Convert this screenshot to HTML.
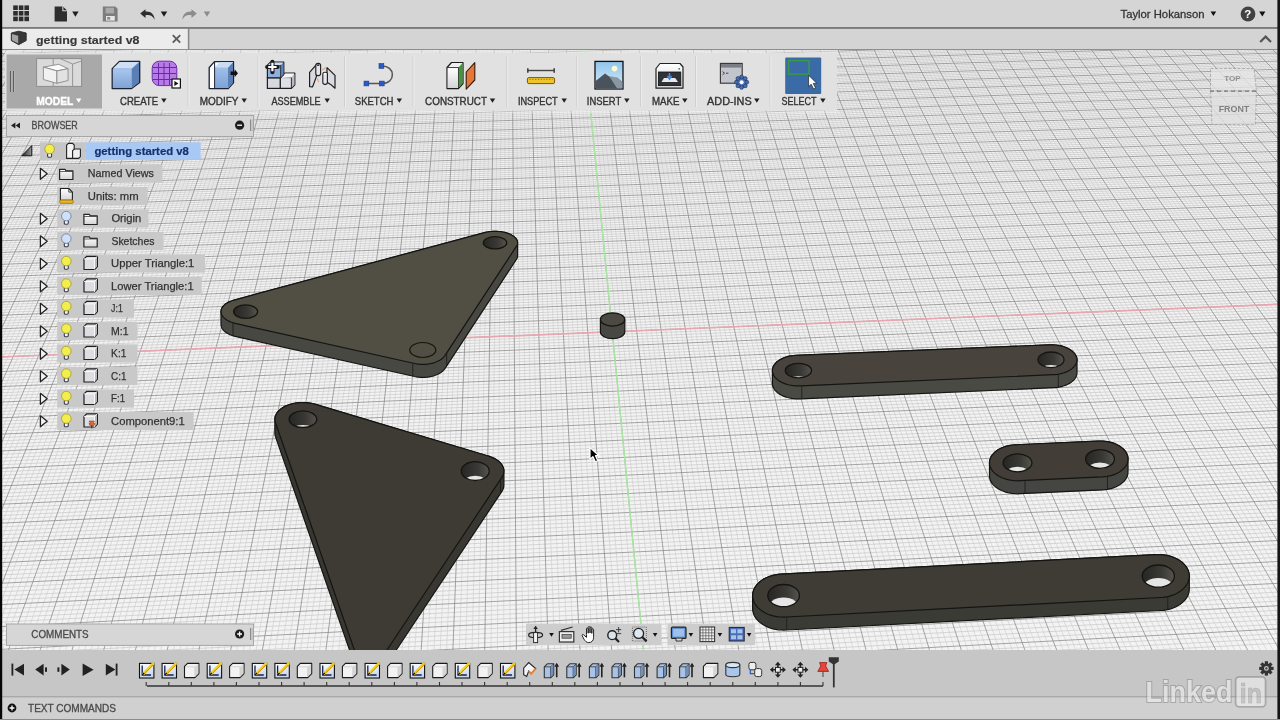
<!DOCTYPE html><html><head><meta charset="utf-8"><style>
html,body{margin:0;padding:0}
body{width:1280px;height:720px;overflow:hidden;position:relative;background:#f0f0f0;font-family:"Liberation Sans",sans-serif}
.vp{position:absolute;left:0;top:0;will-change:transform}
</style></head><body>
<svg class="vp" width="1280" height="720" viewBox="0 0 1280 720">
<rect x="0" y="50" width="1280" height="600" fill="#f3f3f3"/>
<filter id="gblur" x="0" y="0" width="1" height="1"><feGaussianBlur stdDeviation="0.55"/></filter>
<linearGradient id="holeg" x1="0" y1="0" x2="1" y2="0"><stop offset="0" stop-color="#262623"/><stop offset="0.6" stop-color="#3a3935"/><stop offset="1" stop-color="#55544e"/></linearGradient>
<g filter="url(#gblur)">
<path d="M-4.4 50.0L-391.1 650.0M-0.8 50.0L-384.8 650.0M2.8 50.0L-378.4 650.0M10.0 50.0L-365.7 650.0M13.6 50.0L-359.4 650.0M17.2 50.0L-353.0 650.0M20.8 50.0L-346.7 650.0M28.1 50.0L-334.0 650.0M31.7 50.0L-327.7 650.0M35.3 50.0L-321.3 650.0M38.9 50.0L-315.0 650.0M46.1 50.0L-302.3 650.0M49.7 50.0L-296.0 650.0M53.3 50.0L-289.6 650.0M56.9 50.0L-283.3 650.0M64.2 50.0L-270.6 650.0M67.8 50.0L-264.3 650.0M71.4 50.0L-257.9 650.0M75.0 50.0L-251.6 650.0M82.2 50.0L-238.9 650.0M85.8 50.0L-232.6 650.0M89.4 50.0L-226.2 650.0M93.0 50.0L-219.9 650.0M100.3 50.0L-207.2 650.0M103.9 50.0L-200.8 650.0M107.5 50.0L-194.5 650.0M111.1 50.0L-188.2 650.0M118.3 50.0L-175.5 650.0M121.9 50.0L-169.1 650.0M125.6 50.0L-162.8 650.0M129.2 50.0L-156.4 650.0M136.4 50.0L-143.8 650.0M140.0 50.0L-137.4 650.0M143.6 50.0L-131.1 650.0M147.2 50.0L-124.7 650.0M154.4 50.0L-112.0 650.0M158.1 50.0L-105.7 650.0M161.7 50.0L-99.3 650.0M165.3 50.0L-93.0 650.0M172.5 50.0L-80.3 650.0M176.1 50.0L-74.0 650.0M179.7 50.0L-67.6 650.0M183.3 50.0L-61.3 650.0M190.6 50.0L-48.6 650.0M194.2 50.0L-42.2 650.0M197.8 50.0L-35.9 650.0M201.4 50.0L-29.6 650.0M208.6 50.0L-16.9 650.0M212.2 50.0L-10.5 650.0M215.9 50.0L-4.2 650.0M219.5 50.0L2.2 650.0M226.7 50.0L14.9 650.0M230.3 50.0L21.2 650.0M233.9 50.0L27.6 650.0M237.5 50.0L33.9 650.0M244.8 50.0L46.6 650.0M248.4 50.0L52.9 650.0M252.0 50.0L59.3 650.0M255.6 50.0L65.6 650.0M262.8 50.0L78.3 650.0M266.4 50.0L84.7 650.0M270.1 50.0L91.0 650.0M273.7 50.0L97.4 650.0M280.9 50.0L110.1 650.0M284.5 50.0L116.4 650.0M288.1 50.0L122.8 650.0M291.7 50.0L129.1 650.0M299.0 50.0L141.8 650.0M302.6 50.0L148.1 650.0M306.2 50.0L154.5 650.0M309.8 50.0L160.8 650.0M317.0 50.0L173.5 650.0M320.7 50.0L179.9 650.0M324.3 50.0L186.2 650.0M327.9 50.0L192.6 650.0M335.1 50.0L205.3 650.0M338.7 50.0L211.6 650.0M342.3 50.0L218.0 650.0M346.0 50.0L224.3 650.0M353.2 50.0L237.0 650.0M356.8 50.0L243.4 650.0M360.4 50.0L249.7 650.0M364.0 50.0L256.1 650.0M371.3 50.0L268.8 650.0M374.9 50.0L275.1 650.0M378.5 50.0L281.5 650.0M382.1 50.0L287.8 650.0M389.3 50.0L300.5 650.0M393.0 50.0L306.9 650.0M396.6 50.0L313.2 650.0M400.2 50.0L319.6 650.0M407.4 50.0L332.3 650.0M411.0 50.0L338.6 650.0M414.6 50.0L345.0 650.0M418.3 50.0L351.3 650.0M425.5 50.0L364.0 650.0M429.1 50.0L370.4 650.0M432.7 50.0L376.7 650.0M436.3 50.0L383.1 650.0M443.6 50.0L395.8 650.0M447.2 50.0L402.1 650.0M450.8 50.0L408.5 650.0M454.4 50.0L414.8 650.0M461.7 50.0L427.5 650.0M465.3 50.0L433.9 650.0M468.9 50.0L440.2 650.0M472.5 50.0L446.6 650.0M479.7 50.0L459.3 650.0M483.4 50.0L465.6 650.0M487.0 50.0L472.0 650.0M490.6 50.0L478.3 650.0M497.8 50.0L491.0 650.0M501.4 50.0L497.4 650.0M505.1 50.0L503.7 650.0M508.7 50.0L510.1 650.0M515.9 50.0L522.8 650.0M519.5 50.0L529.2 650.0M523.1 50.0L535.5 650.0M526.8 50.0L541.9 650.0M534.0 50.0L554.6 650.0M537.6 50.0L560.9 650.0M541.2 50.0L567.3 650.0M544.8 50.0L573.6 650.0M552.1 50.0L586.3 650.0M555.7 50.0L592.7 650.0M559.3 50.0L599.0 650.0M562.9 50.0L605.4 650.0M570.2 50.0L618.1 650.0M573.8 50.0L624.5 650.0M577.4 50.0L630.8 650.0M581.0 50.0L637.2 650.0M588.3 50.0L649.9 650.0M591.9 50.0L656.2 650.0M595.5 50.0L662.6 650.0M599.1 50.0L668.9 650.0M606.3 50.0L681.6 650.0M610.0 50.0L688.0 650.0M613.6 50.0L694.4 650.0M617.2 50.0L700.7 650.0M624.4 50.0L713.4 650.0M628.1 50.0L719.8 650.0M631.7 50.0L726.1 650.0M635.3 50.0L732.5 650.0M642.5 50.0L745.2 650.0M646.2 50.0L751.6 650.0M649.8 50.0L757.9 650.0M653.4 50.0L764.3 650.0M660.6 50.0L777.0 650.0M664.2 50.0L783.3 650.0M667.9 50.0L789.7 650.0M671.5 50.0L796.0 650.0M678.7 50.0L808.8 650.0M682.3 50.0L815.1 650.0M686.0 50.0L821.5 650.0M689.6 50.0L827.8 650.0M696.8 50.0L840.5 650.0M700.4 50.0L846.9 650.0M704.1 50.0L853.3 650.0M707.7 50.0L859.6 650.0M714.9 50.0L872.3 650.0M718.5 50.0L878.7 650.0M722.2 50.0L885.0 650.0M725.8 50.0L891.4 650.0M733.0 50.0L904.1 650.0M736.6 50.0L910.5 650.0M740.3 50.0L916.8 650.0M743.9 50.0L923.2 650.0M751.1 50.0L935.9 650.0M754.7 50.0L942.3 650.0M758.4 50.0L948.6 650.0M762.0 50.0L955.0 650.0M769.2 50.0L967.7 650.0M772.8 50.0L974.1 650.0M776.5 50.0L980.4 650.0M780.1 50.0L986.8 650.0M787.3 50.0L999.5 650.0M790.9 50.0L1005.9 650.0M794.6 50.0L1012.2 650.0M798.2 50.0L1018.6 650.0M805.4 50.0L1031.3 650.0M809.0 50.0L1037.6 650.0M812.7 50.0L1044.0 650.0M816.3 50.0L1050.4 650.0M823.5 50.0L1063.1 650.0M827.2 50.0L1069.4 650.0M830.8 50.0L1075.8 650.0M834.4 50.0L1082.2 650.0M841.6 50.0L1094.9 650.0M845.3 50.0L1101.3 650.0M848.9 50.0L1107.6 650.0M852.5 50.0L1114.0 650.0M859.7 50.0L1126.7 650.0M863.4 50.0L1133.1 650.0M867.0 50.0L1139.4 650.0M870.6 50.0L1145.8 650.0M877.9 50.0L1158.5 650.0M881.5 50.0L1164.9 650.0M885.1 50.0L1171.2 650.0M888.7 50.0L1177.6 650.0M896.0 50.0L1190.3 650.0M899.6 50.0L1196.7 650.0M903.2 50.0L1203.0 650.0M906.8 50.0L1209.4 650.0M914.1 50.0L1222.1 650.0M917.7 50.0L1228.5 650.0M921.3 50.0L1234.8 650.0M924.9 50.0L1241.2 650.0M932.2 50.0L1253.9 650.0M935.8 50.0L1260.3 650.0M939.4 50.0L1266.7 650.0M943.1 50.0L1273.0 650.0M950.3 50.0L1285.7 650.0M953.9 50.0L1292.1 650.0M957.6 50.0L1298.5 650.0M961.2 50.0L1304.8 650.0M968.4 50.0L1317.6 650.0M972.0 50.0L1323.9 650.0M975.7 50.0L1330.3 650.0M979.3 50.0L1336.7 650.0M986.5 50.0L1349.4 650.0M990.2 50.0L1355.7 650.0M993.8 50.0L1362.1 650.0M997.4 50.0L1368.5 650.0M1004.7 50.0L1381.2 650.0M1008.3 50.0L1387.6 650.0M1011.9 50.0L1393.9 650.0M1015.5 50.0L1400.3 650.0M1022.8 50.0L1413.0 650.0M1026.4 50.0L1419.4 650.0M1030.0 50.0L1425.8 650.0M1033.6 50.0L1432.1 650.0M1040.9 50.0L1444.8 650.0M1044.5 50.0L1451.2 650.0M1048.1 50.0L1457.6 650.0M1051.8 50.0L1463.9 650.0M1059.0 50.0L1476.7 650.0M1062.6 50.0L1483.0 650.0M1066.3 50.0L1489.4 650.0M1069.9 50.0L1495.8 650.0M1077.1 50.0L1508.5 650.0M1080.8 50.0L1514.9 650.0M1084.4 50.0L1521.2 650.0M1088.0 50.0L1527.6 650.0M1095.3 50.0L1540.3 650.0M1098.9 50.0L1546.7 650.0M1102.5 50.0L1553.1 650.0M1106.1 50.0L1559.4 650.0M1113.4 50.0L1572.2 650.0M1117.0 50.0L1578.5 650.0M1120.6 50.0L1584.9 650.0M1124.3 50.0L1591.3 650.0M1131.5 50.0L1604.0 650.0M1135.1 50.0L1610.4 650.0M1138.8 50.0L1616.7 650.0M1142.4 50.0L1623.1 650.0M1149.6 50.0L1635.8 650.0M1153.3 50.0L1642.2 650.0M1156.9 50.0L1648.6 650.0M1160.5 50.0L1654.9 650.0M1167.8 50.0L1667.7 650.0M1171.4 50.0L1674.1 650.0M1175.0 50.0L1680.4 650.0M1178.6 50.0L1686.8 650.0M1185.9 50.0L1699.5 650.0M1189.5 50.0L1705.9 650.0M1193.2 50.0L1712.3 650.0M1196.8 50.0L1718.6 650.0M1204.0 50.0L1731.4 650.0M1207.7 50.0L1737.7 650.0M1211.3 50.0L1744.1 650.0M1214.9 50.0L1750.5 650.0M1222.2 50.0L1763.2 650.0M1225.8 50.0L1769.6 650.0M1229.4 50.0L1776.0 650.0M1233.0 50.0L1782.3 650.0M1240.3 50.0L1795.1 650.0M1243.9 50.0L1801.4 650.0M1247.6 50.0L1807.8 650.0M1251.2 50.0L1814.2 650.0M1258.4 50.0L1826.9 650.0M1262.1 50.0L1833.3 650.0M1265.7 50.0L1839.7 650.0M1269.3 50.0L1846.0 650.0M1276.6 50.0L1858.8 650.0M1280.2 50.0L1865.1 650.0M1283.8 50.0L1871.5 650.0" stroke="#d6d6d6" stroke-width="0.8" fill="none"/>
<path d="M0.0 50.7L1280.0 12.1M0.0 52.2L1280.0 13.6M0.0 55.3L1280.0 16.5M0.0 56.8L1280.0 17.9M0.0 58.3L1280.0 19.4M0.0 59.8L1280.0 20.8M0.0 62.9L1280.0 23.8M0.0 64.5L1280.0 25.3M0.0 66.0L1280.0 26.7M0.0 67.6L1280.0 28.2M0.0 70.8L1280.0 31.2M0.0 72.3L1280.0 32.8M0.0 73.9L1280.0 34.3M0.0 75.5L1280.0 35.8M0.0 78.7L1280.0 38.8M0.0 80.4L1280.0 40.4M0.0 82.0L1280.0 41.9M0.0 83.6L1280.0 43.5M0.0 86.9L1280.0 46.6M0.0 88.5L1280.0 48.2M0.0 90.2L1280.0 49.8M0.0 91.8L1280.0 51.3M0.0 95.2L1280.0 54.5M0.0 96.9L1280.0 56.1M0.0 98.5L1280.0 57.7M0.0 100.2L1280.0 59.3M0.0 103.6L1280.0 62.6M0.0 105.4L1280.0 64.2M0.0 107.1L1280.0 65.9M0.0 108.8L1280.0 67.5M0.0 112.3L1280.0 70.8M0.0 114.0L1280.0 72.5M0.0 115.8L1280.0 74.2M0.0 117.5L1280.0 75.9M0.0 121.1L1280.0 79.2M0.0 122.9L1280.0 80.9M0.0 124.7L1280.0 82.7M0.0 126.5L1280.0 84.4M0.0 130.1L1280.0 87.8M0.0 131.9L1280.0 89.6M0.0 133.7L1280.0 91.3M0.0 135.6L1280.0 93.1M0.0 139.3L1280.0 96.6M0.0 141.1L1280.0 98.4M0.0 143.0L1280.0 100.2M0.0 144.9L1280.0 101.9M0.0 148.7L1280.0 105.5M0.0 150.6L1280.0 107.4M0.0 152.5L1280.0 109.2M0.0 154.4L1280.0 111.0M0.0 158.3L1280.0 114.7M0.0 160.2L1280.0 116.5M0.0 162.1L1280.0 118.4M0.0 164.1L1280.0 120.3M0.0 168.1L1280.0 124.0M0.0 170.0L1280.0 125.9M0.0 172.0L1280.0 127.8M0.0 174.0L1280.0 129.7M0.0 178.1L1280.0 133.6M0.0 180.1L1280.0 135.5M0.0 182.1L1280.0 137.5M0.0 184.2L1280.0 139.4M0.0 188.3L1280.0 143.3M0.0 190.4L1280.0 145.3M0.0 192.5L1280.0 147.3M0.0 194.5L1280.0 149.3M0.0 198.8L1280.0 153.3M0.0 200.9L1280.0 155.3M0.0 203.0L1280.0 157.4M0.0 205.2L1280.0 159.4M0.0 209.5L1280.0 163.5M0.0 211.6L1280.0 165.6M0.0 213.8L1280.0 167.7M0.0 216.0L1280.0 169.8M0.0 220.4L1280.0 174.0M0.0 222.6L1280.0 176.1M0.0 224.9L1280.0 178.2M0.0 227.1L1280.0 180.4M0.0 231.6L1280.0 184.7M0.0 233.9L1280.0 186.8M0.0 236.2L1280.0 189.0M0.0 238.5L1280.0 191.2M0.0 243.1L1280.0 195.6M0.0 245.4L1280.0 197.8M0.0 247.7L1280.0 200.0M0.0 250.1L1280.0 202.3M0.0 254.8L1280.0 206.8M0.0 257.2L1280.0 209.1M0.0 259.6L1280.0 211.3M0.0 262.0L1280.0 213.6M0.0 266.8L1280.0 218.3M0.0 269.3L1280.0 220.6M0.0 271.7L1280.0 222.9M0.0 274.2L1280.0 225.3M0.0 279.2L1280.0 230.0M0.0 281.7L1280.0 232.4M0.0 284.2L1280.0 234.8M0.0 286.7L1280.0 237.2M0.0 291.8L1280.0 242.0M0.0 294.3L1280.0 244.5M0.0 296.9L1280.0 246.9M0.0 299.5L1280.0 249.4M0.0 304.7L1280.0 254.4M0.0 307.3L1280.0 256.9M0.0 310.0L1280.0 259.4M0.0 312.6L1280.0 261.9M0.0 318.0L1280.0 267.0M0.0 320.7L1280.0 269.6M0.0 323.4L1280.0 272.2M0.0 326.1L1280.0 274.8M0.0 331.6L1280.0 280.0M0.0 334.4L1280.0 282.6M0.0 337.1L1280.0 285.3M0.0 339.9L1280.0 288.0M0.0 345.5L1280.0 293.3M0.0 348.4L1280.0 296.0M0.0 351.2L1280.0 298.7M0.0 354.1L1280.0 301.5M0.0 359.9L1280.0 307.0M0.0 362.8L1280.0 309.8M0.0 365.7L1280.0 312.6M0.0 368.7L1280.0 315.4M0.0 374.6L1280.0 321.0M0.0 377.6L1280.0 323.9M0.0 380.6L1280.0 326.7M0.0 383.6L1280.0 329.6M0.0 389.7L1280.0 335.4M0.0 392.8L1280.0 338.3M0.0 395.8L1280.0 341.3M0.0 398.9L1280.0 344.3M0.0 405.2L1280.0 350.2M0.0 408.4L1280.0 353.2M0.0 411.5L1280.0 356.3M0.0 414.7L1280.0 359.3M0.0 421.2L1280.0 365.4M0.0 424.4L1280.0 368.5M0.0 427.7L1280.0 371.6M0.0 430.9L1280.0 374.8M0.0 437.6L1280.0 381.1M0.0 440.9L1280.0 384.3M0.0 444.2L1280.0 387.5M0.0 447.6L1280.0 390.7M0.0 454.4L1280.0 397.2M0.0 457.9L1280.0 400.4M0.0 461.3L1280.0 403.7M0.0 464.8L1280.0 407.0M0.0 471.8L1280.0 413.7M0.0 475.3L1280.0 417.1M0.0 478.9L1280.0 420.5M0.0 482.4L1280.0 423.9M0.0 489.7L1280.0 430.8M0.0 493.3L1280.0 434.2M0.0 497.0L1280.0 437.7M0.0 500.6L1280.0 441.2M0.0 508.1L1280.0 448.3M0.0 511.8L1280.0 451.9M0.0 515.6L1280.0 455.5M0.0 519.4L1280.0 459.1M0.0 527.0L1280.0 466.4M0.0 530.9L1280.0 470.1M0.0 534.8L1280.0 473.8M0.0 538.7L1280.0 477.5M0.0 546.6L1280.0 485.0M0.0 550.5L1280.0 488.8M0.0 554.6L1280.0 492.7M0.0 558.6L1280.0 496.5M0.0 566.7L1280.0 504.3M0.0 570.8L1280.0 508.2M0.0 575.0L1280.0 512.1M0.0 579.1L1280.0 516.1M0.0 587.5L1280.0 524.1M0.0 591.8L1280.0 528.2M0.0 596.0L1280.0 532.2M0.0 600.3L1280.0 536.3M0.0 609.0L1280.0 544.6M0.0 613.4L1280.0 548.8M0.0 617.8L1280.0 553.0M0.0 622.2L1280.0 557.2M0.0 631.2L1280.0 565.7M0.0 635.7L1280.0 570.0M0.0 640.2L1280.0 574.4M0.0 644.8L1280.0 578.8M0.0 654.1L1280.0 587.6M0.0 658.8L1280.0 592.0M0.0 663.5L1280.0 596.5M0.0 668.2L1280.0 601.0M0.0 677.8L1280.0 610.2M0.0 682.6L1280.0 614.8M0.0 687.5L1280.0 619.4M0.0 692.4L1280.0 624.1M0.0 702.3L1280.0 633.6M0.0 707.3L1280.0 638.3M0.0 712.3L1280.0 643.1" stroke="#cdcdcd" stroke-width="0.8" fill="none"/>
<path d="M6.4 50.0L-372.1 650.0M24.4 50.0L-340.4 650.0M42.5 50.0L-308.7 650.0M60.5 50.0L-277.0 650.0M78.6 50.0L-245.2 650.0M96.7 50.0L-213.5 650.0M114.7 50.0L-181.8 650.0M132.8 50.0L-150.1 650.0M150.8 50.0L-118.4 650.0M168.9 50.0L-86.7 650.0M187.0 50.0L-54.9 650.0M205.0 50.0L-23.2 650.0M223.1 50.0L8.5 650.0M241.2 50.0L40.2 650.0M259.2 50.0L72.0 650.0M277.3 50.0L103.7 650.0M295.4 50.0L135.4 650.0M313.4 50.0L167.2 650.0M331.5 50.0L198.9 650.0M349.6 50.0L230.7 650.0M367.6 50.0L262.4 650.0M385.7 50.0L294.2 650.0M403.8 50.0L325.9 650.0M421.9 50.0L357.7 650.0M440.0 50.0L389.4 650.0M458.0 50.0L421.2 650.0M476.1 50.0L452.9 650.0M494.2 50.0L484.7 650.0M512.3 50.0L516.4 650.0M530.4 50.0L548.2 650.0M548.5 50.0L580.0 650.0M566.5 50.0L611.7 650.0M584.6 50.0L643.5 650.0M602.7 50.0L675.3 650.0M620.8 50.0L707.1 650.0M638.9 50.0L738.8 650.0M657.0 50.0L770.6 650.0M675.1 50.0L802.4 650.0M693.2 50.0L834.2 650.0M711.3 50.0L866.0 650.0M729.4 50.0L897.8 650.0M747.5 50.0L929.5 650.0M765.6 50.0L961.3 650.0M783.7 50.0L993.1 650.0M801.8 50.0L1024.9 650.0M819.9 50.0L1056.7 650.0M838.0 50.0L1088.5 650.0M856.1 50.0L1120.3 650.0M874.2 50.0L1152.1 650.0M892.3 50.0L1183.9 650.0M910.5 50.0L1215.8 650.0M928.6 50.0L1247.6 650.0M946.7 50.0L1279.4 650.0M964.8 50.0L1311.2 650.0M982.9 50.0L1343.0 650.0M1001.0 50.0L1374.8 650.0M1019.1 50.0L1406.7 650.0M1037.3 50.0L1438.5 650.0M1055.4 50.0L1470.3 650.0M1073.5 50.0L1502.1 650.0M1091.6 50.0L1534.0 650.0M1109.8 50.0L1565.8 650.0M1127.9 50.0L1597.6 650.0M1146.0 50.0L1629.5 650.0M1164.1 50.0L1661.3 650.0M1182.3 50.0L1693.2 650.0M1200.4 50.0L1725.0 650.0M1218.5 50.0L1756.8 650.0M1236.7 50.0L1788.7 650.0M1254.8 50.0L1820.5 650.0M1272.9 50.0L1852.4 650.0M0.0 53.7L1280.0 15.0M0.0 61.4L1280.0 22.3M0.0 69.2L1280.0 29.7M0.0 77.1L1280.0 37.3M0.0 85.2L1280.0 45.0M0.0 93.5L1280.0 52.9M0.0 101.9L1280.0 61.0M0.0 110.5L1280.0 69.2M0.0 119.3L1280.0 77.5M0.0 128.3L1280.0 86.1M0.0 137.4L1280.0 94.8M0.0 146.8L1280.0 103.7M0.0 156.3L1280.0 112.8M0.0 166.1L1280.0 122.1M0.0 176.0L1280.0 131.7M0.0 186.2L1280.0 141.4M0.0 196.7L1280.0 151.3M0.0 207.3L1280.0 161.5M0.0 218.2L1280.0 171.9M0.0 229.4L1280.0 182.5M0.0 240.8L1280.0 193.4M0.0 252.5L1280.0 204.5M0.0 264.4L1280.0 215.9M0.0 276.7L1280.0 227.6M0.0 289.2L1280.0 239.6M0.0 302.1L1280.0 251.9M0.0 315.3L1280.0 264.5M0.0 328.8L1280.0 277.4M0.0 342.7L1280.0 290.6M0.0 357.0L1280.0 304.2M0.0 371.6L1280.0 318.2M0.0 386.6L1280.0 332.5M0.0 402.1L1280.0 347.2M0.0 417.9L1280.0 362.4M0.0 434.2L1280.0 377.9M0.0 451.0L1280.0 393.9M0.0 468.3L1280.0 410.4M0.0 486.0L1280.0 427.3M0.0 504.3L1280.0 444.8M0.0 523.2L1280.0 462.7M0.0 542.6L1280.0 481.3M0.0 562.6L1280.0 500.4M0.0 583.3L1280.0 520.1M0.0 604.6L1280.0 540.4M0.0 626.7L1280.0 561.4M0.0 649.4L1280.0 583.2M0.0 673.0L1280.0 605.6M0.0 697.3L1280.0 628.8" stroke="#888888" stroke-width="0.75" fill="none"/>
</g>
<path d="M0.0 357.0L1280.0 304.2" stroke="#eaa6b0" stroke-width="1.7" fill="none"/>
<path d="M584.6 50.0L643.5 650.0" stroke="#a8e6a2" stroke-width="1.5" fill="none"/>
<path d="M221.0 311.6L221.1 310.5L221.4 309.3L221.8 308.2L222.5 307.2L223.3 306.1L224.3 305.1L225.4 304.1L226.8 303.2L228.2 302.4L229.8 301.6L231.5 301.0L233.3 300.3L235.2 299.8L483.7 232.8L485.4 232.4L487.3 232.0L489.2 231.7L491.1 231.5L493.0 231.3L495.0 231.3L497.0 231.3L498.9 231.5L500.8 231.7L502.7 232.0L504.6 232.4L506.3 232.8L508.0 233.4L509.5 234.0L511.0 234.7L512.3 235.4L513.5 236.2L514.6 237.1L515.5 237.9L516.2 238.9L516.8 239.8L517.3 240.8L517.5 241.8L517.6 242.8L517.6 255.8L517.5 256.8L517.3 257.8L516.8 258.8L516.2 259.7L445.4 367.9L444.6 369.1L443.6 370.2L442.5 371.3L441.2 372.3L439.8 373.2L438.2 374.0L436.6 374.8L434.8 375.5L432.9 376.1L431.0 376.5L429.0 376.9L427.0 377.2L424.9 377.3L422.8 377.4L420.7 377.3L418.6 377.2L416.6 376.9L414.6 376.5L235.2 336.4L233.3 335.9L231.5 335.2L229.8 334.6L228.2 333.8L226.8 333.0L225.4 332.1L224.3 331.1L223.3 330.1L222.5 329.0L221.8 328.0L221.4 326.9L221.1 325.7L221.0 324.6Z" fill="#484843" stroke="#141412" stroke-width="1.2"/><path d="M221.0 311.6L221.1 310.5L221.4 309.3L221.8 308.2L222.5 307.2L223.3 306.1L224.3 305.1L225.4 304.1L226.8 303.2L228.2 302.4L229.8 301.6L231.5 301.0L233.3 300.3L235.2 299.8L483.7 232.8L485.4 232.4L487.3 232.0L489.2 231.7L491.1 231.5L493.0 231.3L495.0 231.3L497.0 231.3L498.9 231.5L500.8 231.7L502.7 232.0L504.6 232.4L506.3 232.8L508.0 233.4L509.5 234.0L511.0 234.7L512.3 235.4L513.5 236.2L514.6 237.1L515.5 237.9L516.2 238.9L516.8 239.8L517.3 240.8L517.5 241.8L517.6 242.8L517.5 243.8L517.3 244.8L516.8 245.8L516.2 246.7L445.4 354.9L444.6 356.1L443.6 357.2L442.5 358.3L441.2 359.3L439.8 360.2L438.2 361.0L436.6 361.8L434.8 362.5L432.9 363.1L431.0 363.5L429.0 363.9L427.0 364.2L424.9 364.3L422.8 364.4L420.7 364.3L418.6 364.2L416.6 363.9L414.6 363.5L235.2 323.4L233.3 322.9L231.5 322.2L229.8 321.6L228.2 320.8L226.8 320.0L225.4 319.1L224.3 318.1L223.3 317.1L222.5 316.0L221.8 315.0L221.4 313.9L221.1 312.7Z" fill="#514f43" stroke="#141412" stroke-width="1.2"/><path d="M233.0 322.8V335.8" stroke="#1e1e1b" stroke-width="0.9"/><path d="M412.8 363.1V376.1" stroke="#1e1e1b" stroke-width="0.9"/><path d="M446.7 352.9V365.9" stroke="#1e1e1b" stroke-width="0.9"/><clipPath id="h245_311"><ellipse cx="245.6" cy="311.6" rx="12.0" ry="6.7"/></clipPath><ellipse cx="245.6" cy="311.6" rx="12.0" ry="6.7" fill="url(#holeg)"/><ellipse cx="245.6" cy="324.6" rx="12.0" ry="6.7" fill="#e6e6e6" clip-path="url(#h245_311)"/><ellipse cx="245.6" cy="311.6" rx="12.0" ry="6.7" fill="none" stroke="#141412" stroke-width="1.3"/><clipPath id="h495_242"><ellipse cx="495.0" cy="242.8" rx="11.7" ry="6.1"/></clipPath><ellipse cx="495.0" cy="242.8" rx="11.7" ry="6.1" fill="url(#holeg)"/><ellipse cx="495.0" cy="255.8" rx="11.7" ry="6.1" fill="#e6e6e6" clip-path="url(#h495_242)"/><ellipse cx="495.0" cy="242.8" rx="11.7" ry="6.1" fill="none" stroke="#141412" stroke-width="1.3"/><ellipse cx="422.8" cy="350.0" rx="13.0" ry="7.5" fill="none" stroke="#141412" stroke-width="1.2"/><path d="M274.9 419.2L275.0 417.7L275.3 416.3L275.9 414.9L276.6 413.5L277.5 412.1L278.7 410.8L280.0 409.6L281.5 408.5L283.1 407.4L284.9 406.4L286.8 405.5L288.9 404.7L291.1 404.1L293.3 403.5L295.7 403.1L298.0 402.8L300.5 402.6L302.9 402.5L305.3 402.6L307.8 402.8L310.1 403.1L312.5 403.5L314.7 404.1L487.3 455.7L489.5 456.4L491.7 457.2L493.6 458.1L495.5 459.1L497.2 460.2L498.7 461.3L500.1 462.6L501.2 463.9L502.2 465.3L502.9 466.7L503.5 468.1L503.8 469.6L503.9 471.1L503.9 485.1L503.8 486.6L503.5 488.1L502.9 489.5L502.2 490.9L379.0 676.0L358.5 676.0L275.3 436.1L275.0 434.7L274.9 433.2Z" fill="#383731" stroke="#141412" stroke-width="1.2"/><path d="M274.9 419.2L275.0 417.7L275.3 416.3L275.9 414.9L276.6 413.5L277.5 412.1L278.7 410.8L280.0 409.6L281.5 408.5L283.1 407.4L284.9 406.4L286.8 405.5L288.9 404.7L291.1 404.1L293.3 403.5L295.7 403.1L298.0 402.8L300.5 402.6L302.9 402.5L305.3 402.6L307.8 402.8L310.1 403.1L312.5 403.5L314.7 404.1L487.3 455.7L489.5 456.4L491.7 457.2L493.6 458.1L495.5 459.1L497.2 460.2L498.7 461.3L500.1 462.6L501.2 463.9L502.2 465.3L502.9 466.7L503.5 468.1L503.8 469.6L503.9 471.1L503.8 472.6L503.5 474.1L502.9 475.5L502.2 476.9L379.0 662.0L358.5 662.0L275.3 422.1L275.0 420.7Z" fill="#3e3b34" stroke="#141412" stroke-width="1.2"/><path d="M500.5 479.5V493.5" stroke="#1e1e1b" stroke-width="0.9"/><clipPath id="h302_419"><ellipse cx="302.9" cy="419.2" rx="13.8" ry="8.3"/></clipPath><ellipse cx="302.9" cy="419.2" rx="13.8" ry="8.3" fill="url(#holeg)"/><ellipse cx="302.9" cy="433.2" rx="13.8" ry="8.3" fill="#e6e6e6" clip-path="url(#h302_419)"/><ellipse cx="302.9" cy="419.2" rx="13.8" ry="8.3" fill="none" stroke="#141412" stroke-width="1.3"/><clipPath id="h475_471"><ellipse cx="475.2" cy="471.1" rx="14.0" ry="9.4"/></clipPath><ellipse cx="475.2" cy="471.1" rx="14.0" ry="9.4" fill="url(#holeg)"/><ellipse cx="475.2" cy="485.1" rx="14.0" ry="9.4" fill="#e6e6e6" clip-path="url(#h475_471)"/><ellipse cx="475.2" cy="471.1" rx="14.0" ry="9.4" fill="none" stroke="#141412" stroke-width="1.3"/><path d="M772.4 370.6L772.5 369.3L772.8 367.9L773.3 366.6L774.0 365.4L774.8 364.1L775.9 363.0L777.1 361.8L778.5 360.8L780.0 359.8L781.7 358.9L783.5 358.1L785.4 357.3L787.4 356.7L789.5 356.2L791.7 355.8L793.9 355.5L796.1 355.4L1048.7 344.9L1051.0 344.8L1053.3 344.9L1055.5 345.0L1057.7 345.3L1059.9 345.7L1062.0 346.2L1064.0 346.8L1065.9 347.5L1067.7 348.3L1069.4 349.2L1070.9 350.2L1072.3 351.2L1073.5 352.3L1074.6 353.5L1075.4 354.7L1076.1 355.9L1076.6 357.2L1076.9 358.5L1077.0 359.8L1077.0 372.8L1076.9 374.1L1076.6 375.4L1076.1 376.7L1075.4 377.9L1074.6 379.1L1073.5 380.3L1072.3 381.4L1070.9 382.4L1069.4 383.4L1067.7 384.3L1065.9 385.1L1064.0 385.8L1062.0 386.4L1059.9 386.9L1057.7 387.3L1055.5 387.6L1053.3 387.7L800.7 398.8L798.4 398.9L796.1 398.8L793.9 398.7L791.7 398.4L789.5 398.0L787.4 397.5L785.4 396.9L783.5 396.1L781.7 395.3L780.0 394.4L778.5 393.4L777.1 392.4L775.9 391.2L774.8 390.1L774.0 388.8L773.3 387.6L772.8 386.3L772.5 384.9L772.4 383.6Z" fill="#4a4a45" stroke="#141412" stroke-width="1.2"/><path d="M772.4 370.6L772.5 369.3L772.8 367.9L773.3 366.6L774.0 365.4L774.8 364.1L775.9 363.0L777.1 361.8L778.5 360.8L780.0 359.8L781.7 358.9L783.5 358.1L785.4 357.3L787.4 356.7L789.5 356.2L791.7 355.8L793.9 355.5L796.1 355.4L1048.7 344.9L1051.0 344.8L1053.3 344.9L1055.5 345.0L1057.7 345.3L1059.9 345.7L1062.0 346.2L1064.0 346.8L1065.9 347.5L1067.7 348.3L1069.4 349.2L1070.9 350.2L1072.3 351.2L1073.5 352.3L1074.6 353.5L1075.4 354.7L1076.1 355.9L1076.6 357.2L1076.9 358.5L1077.0 359.8L1076.9 361.1L1076.6 362.4L1076.1 363.7L1075.4 364.9L1074.6 366.1L1073.5 367.3L1072.3 368.4L1070.9 369.4L1069.4 370.4L1067.7 371.3L1065.9 372.1L1064.0 372.8L1062.0 373.4L1059.9 373.9L1057.7 374.3L1055.5 374.6L1053.3 374.7L800.7 385.8L798.4 385.9L796.1 385.8L793.9 385.7L791.7 385.4L789.5 385.0L787.4 384.5L785.4 383.9L783.5 383.1L781.7 382.3L780.0 381.4L778.5 380.4L777.1 379.4L775.9 378.2L774.8 377.1L774.0 375.8L773.3 374.6L772.8 373.3L772.5 371.9Z" fill="#48443d" stroke="#141412" stroke-width="1.2"/><path d="M801.8 385.8V398.8" stroke="#1e1e1b" stroke-width="0.9"/><path d="M1058.3 374.2V387.2" stroke="#1e1e1b" stroke-width="0.9"/><clipPath id="h798_370"><ellipse cx="798.4" cy="370.6" rx="13.1" ry="7.3"/></clipPath><ellipse cx="798.4" cy="370.6" rx="13.1" ry="7.3" fill="url(#holeg)"/><ellipse cx="798.4" cy="383.6" rx="13.1" ry="7.3" fill="#e6e6e6" clip-path="url(#h798_370)"/><ellipse cx="798.4" cy="370.6" rx="13.1" ry="7.3" fill="none" stroke="#141412" stroke-width="1.3"/><clipPath id="h1051_359"><ellipse cx="1051.0" cy="359.8" rx="13.0" ry="7.8"/></clipPath><ellipse cx="1051.0" cy="359.8" rx="13.0" ry="7.8" fill="url(#holeg)"/><ellipse cx="1051.0" cy="372.8" rx="13.0" ry="7.8" fill="#e6e6e6" clip-path="url(#h1051_359)"/><ellipse cx="1051.0" cy="359.8" rx="13.0" ry="7.8" fill="none" stroke="#141412" stroke-width="1.3"/><path d="M989.5 462.8L989.6 461.2L989.9 459.6L990.5 458.1L991.2 456.6L992.1 455.1L993.3 453.8L994.6 452.4L996.1 451.2L997.7 450.0L999.5 449.0L1001.4 448.0L1003.5 447.2L1005.7 446.4L1007.9 445.8L1010.3 445.4L1012.6 445.0L1015.1 444.8L1097.6 441.1L1100.0 441.0L1102.4 441.1L1104.9 441.3L1107.2 441.6L1109.6 442.1L1111.8 442.7L1114.0 443.4L1116.1 444.3L1118.0 445.2L1119.8 446.3L1121.4 447.4L1122.9 448.7L1124.2 450.0L1125.4 451.4L1126.3 452.8L1127.0 454.3L1127.6 455.9L1127.9 457.4L1128.0 459.0L1128.0 472.0L1127.9 473.6L1127.6 475.1L1127.0 476.7L1126.3 478.2L1125.4 479.6L1124.2 481.0L1122.9 482.3L1121.4 483.6L1119.8 484.7L1118.0 485.8L1116.1 486.7L1114.0 487.6L1111.8 488.3L1109.6 488.9L1107.2 489.4L1104.9 489.7L1102.4 489.9L1019.9 493.7L1017.5 493.8L1015.1 493.7L1012.6 493.5L1010.3 493.1L1007.9 492.7L1005.7 492.1L1003.5 491.3L1001.4 490.5L999.5 489.5L997.7 488.5L996.1 487.3L994.6 486.1L993.3 484.8L992.1 483.4L991.2 481.9L990.5 480.4L989.9 478.9L989.6 477.3L989.5 475.8Z" fill="#454541" stroke="#141412" stroke-width="1.2"/><path d="M989.5 462.8L989.6 461.2L989.9 459.6L990.5 458.1L991.2 456.6L992.1 455.1L993.3 453.8L994.6 452.4L996.1 451.2L997.7 450.0L999.5 449.0L1001.4 448.0L1003.5 447.2L1005.7 446.4L1007.9 445.8L1010.3 445.4L1012.6 445.0L1015.1 444.8L1097.6 441.1L1100.0 441.0L1102.4 441.1L1104.9 441.3L1107.2 441.6L1109.6 442.1L1111.8 442.7L1114.0 443.4L1116.1 444.3L1118.0 445.2L1119.8 446.3L1121.4 447.4L1122.9 448.7L1124.2 450.0L1125.4 451.4L1126.3 452.8L1127.0 454.3L1127.6 455.9L1127.9 457.4L1128.0 459.0L1127.9 460.6L1127.6 462.1L1127.0 463.7L1126.3 465.2L1125.4 466.6L1124.2 468.0L1122.9 469.3L1121.4 470.6L1119.8 471.7L1118.0 472.8L1116.1 473.7L1114.0 474.6L1111.8 475.3L1109.6 475.9L1107.2 476.4L1104.9 476.7L1102.4 476.9L1019.9 480.7L1017.5 480.8L1015.1 480.7L1012.6 480.5L1010.3 480.1L1007.9 479.7L1005.7 479.1L1003.5 478.3L1001.4 477.5L999.5 476.5L997.7 475.5L996.1 474.3L994.6 473.1L993.3 471.8L992.1 470.4L991.2 468.9L990.5 467.4L989.9 465.9L989.6 464.3Z" fill="#423e37" stroke="#141412" stroke-width="1.2"/><path d="M1025.0 480.5V493.5" stroke="#1e1e1b" stroke-width="0.9"/><path d="M1107.5 476.3V489.3" stroke="#1e1e1b" stroke-width="0.9"/><clipPath id="h1017_462"><ellipse cx="1017.5" cy="462.8" rx="14.4" ry="9.0"/></clipPath><ellipse cx="1017.5" cy="462.8" rx="14.4" ry="9.0" fill="url(#holeg)"/><ellipse cx="1017.5" cy="475.8" rx="14.4" ry="9.0" fill="#e6e6e6" clip-path="url(#h1017_462)"/><ellipse cx="1017.5" cy="462.8" rx="14.4" ry="9.0" fill="none" stroke="#141412" stroke-width="1.3"/><clipPath id="h1100_459"><ellipse cx="1100.0" cy="459.0" rx="14.4" ry="9.4"/></clipPath><ellipse cx="1100.0" cy="459.0" rx="14.4" ry="9.4" fill="url(#holeg)"/><ellipse cx="1100.0" cy="472.0" rx="14.4" ry="9.4" fill="#e6e6e6" clip-path="url(#h1100_459)"/><ellipse cx="1100.0" cy="459.0" rx="14.4" ry="9.4" fill="none" stroke="#141412" stroke-width="1.3"/><path d="M752.6 595.6L752.7 593.7L753.1 591.9L753.7 590.0L754.5 588.2L755.5 586.5L756.8 584.9L758.2 583.3L759.9 581.8L761.7 580.4L763.7 579.1L765.8 578.0L768.1 577.0L770.5 576.1L773.0 575.4L775.6 574.8L778.2 574.4L780.9 574.2L1155.6 554.7L1158.3 554.6L1161.0 554.7L1163.7 554.9L1166.3 555.3L1168.9 555.9L1171.4 556.6L1173.8 557.5L1176.1 558.5L1178.2 559.6L1180.2 560.9L1182.0 562.3L1183.7 563.8L1185.1 565.4L1186.4 567.0L1187.4 568.7L1188.2 570.5L1188.8 572.4L1189.2 574.2L1189.3 576.1L1189.3 589.1L1189.2 591.0L1188.8 592.8L1188.2 594.7L1187.4 596.5L1186.4 598.2L1185.1 599.9L1183.7 601.4L1182.0 602.9L1180.2 604.3L1178.2 605.6L1176.1 606.7L1173.8 607.7L1171.4 608.6L1168.9 609.3L1166.3 609.9L1163.7 610.3L1161.0 610.5L786.3 630.0L783.6 630.1L780.9 630.0L778.2 629.8L775.6 629.4L773.0 628.8L770.5 628.1L768.1 627.2L765.8 626.2L763.7 625.1L761.7 623.8L759.9 622.4L758.2 620.9L756.8 619.4L755.5 617.7L754.5 616.0L753.7 614.2L753.1 612.3L752.7 610.5L752.6 608.6Z" fill="#3b3b35" stroke="#141412" stroke-width="1.2"/><path d="M752.6 595.6L752.7 593.7L753.1 591.9L753.7 590.0L754.5 588.2L755.5 586.5L756.8 584.9L758.2 583.3L759.9 581.8L761.7 580.4L763.7 579.1L765.8 578.0L768.1 577.0L770.5 576.1L773.0 575.4L775.6 574.8L778.2 574.4L780.9 574.2L1155.6 554.7L1158.3 554.6L1161.0 554.7L1163.7 554.9L1166.3 555.3L1168.9 555.9L1171.4 556.6L1173.8 557.5L1176.1 558.5L1178.2 559.6L1180.2 560.9L1182.0 562.3L1183.7 563.8L1185.1 565.4L1186.4 567.0L1187.4 568.7L1188.2 570.5L1188.8 572.4L1189.2 574.2L1189.3 576.1L1189.2 578.0L1188.8 579.8L1188.2 581.7L1187.4 583.5L1186.4 585.2L1185.1 586.9L1183.7 588.4L1182.0 589.9L1180.2 591.3L1178.2 592.6L1176.1 593.7L1173.8 594.7L1171.4 595.6L1168.9 596.3L1166.3 596.9L1163.7 597.3L1161.0 597.5L786.3 617.0L783.6 617.1L780.9 617.0L778.2 616.8L775.6 616.4L773.0 615.8L770.5 615.1L768.1 614.2L765.8 613.2L763.7 612.1L761.7 610.8L759.9 609.4L758.2 607.9L756.8 606.4L755.5 604.7L754.5 603.0L753.7 601.2L753.1 599.3L752.7 597.5Z" fill="#3f3b35" stroke="#141412" stroke-width="1.2"/><path d="M786.7 617.0V630.0" stroke="#1e1e1b" stroke-width="0.9"/><path d="M1167.8 596.6V609.6" stroke="#1e1e1b" stroke-width="0.9"/><clipPath id="h783_595"><ellipse cx="783.6" cy="595.6" rx="15.8" ry="11.1"/></clipPath><ellipse cx="783.6" cy="595.6" rx="15.8" ry="11.1" fill="url(#holeg)"/><ellipse cx="783.6" cy="608.6" rx="15.8" ry="11.1" fill="#e6e6e6" clip-path="url(#h783_595)"/><ellipse cx="783.6" cy="595.6" rx="15.8" ry="11.1" fill="none" stroke="#141412" stroke-width="1.3"/><clipPath id="h1158_576"><ellipse cx="1158.3" cy="576.1" rx="16.1" ry="11.1"/></clipPath><ellipse cx="1158.3" cy="576.1" rx="16.1" ry="11.1" fill="url(#holeg)"/><ellipse cx="1158.3" cy="589.1" rx="16.1" ry="11.1" fill="#e6e6e6" clip-path="url(#h1158_576)"/><ellipse cx="1158.3" cy="576.1" rx="16.1" ry="11.1" fill="none" stroke="#141412" stroke-width="1.3"/><path d="M600.4 319.4 A12.2 6.6 0 0 0 624.8 319.4 L624.8 332 A12.2 6.6 0 0 1 600.4 332Z" fill="#474743" stroke="#141412" stroke-width="1.2"/><ellipse cx="612.6" cy="319.4" rx="12.2" ry="6.6" fill="#4b4941" stroke="#141412" stroke-width="1.2"/>
<path d="M590 447.6 L590 459.2 L592.9 456.6 L595.3 461.8 L597.8 460.7 L595.5 455.7 L599 455.7Z" fill="#000" stroke="#fff" stroke-width="1.2" stroke-linejoin="round"/>
</svg><svg class="vp" width="1280" height="720" viewBox="0 0 1280 720" font-family="Liberation Sans, sans-serif"><defs>
<linearGradient id="gBlueF" x1="0" y1="0" x2="0" y2="1"><stop offset="0" stop-color="#a9c6ee"/><stop offset="1" stop-color="#7fa3d6"/></linearGradient>
<linearGradient id="gWhite" x1="0" y1="0" x2="0" y2="1"><stop offset="0" stop-color="#ffffff"/><stop offset="1" stop-color="#d4d4d8"/></linearGradient>
<linearGradient id="gSky" x1="0" y1="0" x2="0" y2="1"><stop offset="0" stop-color="#8fc4ec"/><stop offset="1" stop-color="#d8ecf8"/></linearGradient>
<linearGradient id="gTri" x1="0" y1="0" x2="1" y2="0"><stop offset="0" stop-color="#222"/><stop offset="1" stop-color="#9a9a9a"/></linearGradient>
<symbol id="bulbY" overflow="visible"><rect x="-2" y="4" width="4" height="4.2" rx="1.2" fill="#f4f2fa" stroke="#3c3c48" stroke-width="1.1"/><circle r="4.8" fill="#f3ee4e" stroke="#a9a235" stroke-width="0.9"/></symbol>
<symbol id="bulbB" overflow="visible"><rect x="-2" y="4" width="4" height="4.2" rx="1.2" fill="#f4f2fa" stroke="#3c3c48" stroke-width="1.1"/><circle r="4.8" fill="#cfe0f8" stroke="#6f86a6" stroke-width="0.9"/></symbol>
<symbol id="tri" overflow="visible"><path d="M0.8 0.8 L7.6 6.3 L0.8 11.8Z" fill="#f2f2f2" stroke="#222" stroke-width="1.3" stroke-linejoin="round"/></symbol>
<symbol id="folder" overflow="visible"><path d="M0.6 1.2h5.4l1 1.6h6.9v8.6h-13.3z" fill="url(#gWhite)" stroke="#222" stroke-width="1.2" stroke-linejoin="round"/><path d="M0.6 3.4h13.3" stroke="#444" stroke-width="0.8"/></symbol>
<symbol id="cubeI" overflow="visible"><path d="M0.6 3.2 L3.4 0.6 H14 V11 L11.2 13.8 H0.6Z" fill="#dedee2" stroke="#1e1e1e" stroke-width="1.2" stroke-linejoin="round"/><path d="M0.6 3.2 H11.2 V13.8 M11.2 3.2 L14 0.6" fill="none" stroke="#fff" stroke-width="0.9"/><path d="M11.6 3.6 L13.6 1.6 V10.8 L11.6 12.8Z" fill="#b8b8bc"/></symbol>
<symbol id="tSketch" overflow="visible"><linearGradient id="gSk" x1="0" y1="0" x2="0.3" y2="1"><stop offset="0" stop-color="#ffffff"/><stop offset="1" stop-color="#c9d6ea"/></linearGradient><rect x="0.9" y="0.6" width="14.4" height="14.6" fill="url(#gSk)" stroke="#111" stroke-width="1.1"/><path d="M3.6 2.8V12.2H12.4" fill="none" stroke="#152055" stroke-width="1.3"/><path d="M5 10.8 L14.4 1" stroke="#f2d020" stroke-width="2.8" stroke-linecap="round"/><path d="M6.4 10.4 L14.6 2.2" stroke="#c87a10" stroke-width="0.8"/><path d="M3.8 12 L5.6 10.2" stroke="#111" stroke-width="1.4"/></symbol>
<symbol id="tBox" overflow="visible"><path d="M0.6 3.6 L3.6 0.6 H15 V10.8 L11 14.8 H0.6Z" fill="#f2f2f2" stroke="#1a1a1a" stroke-width="1.1" stroke-linejoin="round"/><path d="M11 4 L14.4 1.2 V10.6 L11 14Z" fill="#d6d6d6"/><path d="M1.2 4 H11 V14.2" fill="none" stroke="#c8c8c8" stroke-width="0.7"/></symbol>
<symbol id="tExt" overflow="visible"><path d="M0.6 5 L3.6 2 H10 V13 L7 16 H0.6Z" fill="#a9c3e6" stroke="#333" stroke-width="1.1" stroke-linejoin="round"/><path d="M0.6 5 H7 V16 M7 5 L10 2" fill="none" stroke="#333" stroke-width="0.8"/><path d="M7.4 5.4 L9.6 3.2V12.8L7.4 15Z" fill="#6f8fbf"/><path d="M13 15.5V2.5" stroke="#222" stroke-width="1.6"/><path d="M10.6 5 L13 1 L15.4 5Z" fill="#222"/></symbol>
<symbol id="tMove" overflow="visible"><path d="M8 1.5V14.5M1.5 8H14.5" stroke="#222" stroke-width="1.6"/><path d="M8 0L5 3.4H11Z M8 16L5 12.6H11Z M0 8L3.4 5V11Z M16 8L12.6 5V11Z" fill="#222"/><rect x="5.6" y="5.6" width="4.8" height="4.8" fill="#eee" stroke="#222" stroke-width="1"/></symbol>
</defs><rect x="0" y="0" width="1280" height="27.4" fill="#d5d5d5"/><path d="M0 28H1280" stroke="#7a7a7a" stroke-width="1.8"/><rect x="0" y="28.9" width="1280" height="20.6" fill="#d4d4d4"/><rect x="2" y="28.9" width="186" height="20.3" fill="#ececec"/><path d="M188.6 28.9V49.2" stroke="#8a8a8a" stroke-width="1.6"/><path d="M0 49.5H1280" stroke="#8e8e8e" stroke-width="1.2"/><rect x="2" y="50.1" width="836" height="3" fill="#f2f2f2" opacity="0.5"/><rect x="2" y="110.4" width="836" height="3" fill="#f2f2f2" opacity="0.4"/><rect x="13.2" y="5.4" width="4.6" height="4.6" fill="#2e2e2e"/><rect x="13.2" y="11.0" width="4.6" height="4.6" fill="#2e2e2e"/><rect x="13.2" y="16.6" width="4.6" height="4.6" fill="#2e2e2e"/><rect x="18.8" y="5.4" width="4.6" height="4.6" fill="#2e2e2e"/><rect x="18.8" y="11.0" width="4.6" height="4.6" fill="#2e2e2e"/><rect x="18.8" y="16.6" width="4.6" height="4.6" fill="#2e2e2e"/><rect x="24.4" y="5.4" width="4.6" height="4.6" fill="#2e2e2e"/><rect x="24.4" y="11.0" width="4.6" height="4.6" fill="#2e2e2e"/><rect x="24.4" y="16.6" width="4.6" height="4.6" fill="#2e2e2e"/><path d="M54.6 6.6h8l4.4 4.4v10.6h-12.4z" fill="#2e2e2e"/><path d="M62.6 6.6v4.4h4.4" fill="#d5d5d5" stroke="#d5d5d5" stroke-width="0.6"/><path d="M63.4 6.9l3.4 3.4h-3.4z" fill="#2e2e2e"/><path d="M72.2 11.6h6.4l-3.2 5.120000000000001z" fill="#1e1e1e"/><path d="M102.8 6.6h12.6l2.2 2.2v12.8h-14.8z" fill="#7d7d7d"/><rect x="105.6" y="7.8" width="8.4" height="5.6" fill="#a9a9a9"/><rect x="106" y="16" width="8.8" height="4.6" fill="#e6e6e6"/><rect x="107.2" y="17" width="3" height="2.6" fill="#8a8a8a"/><path d="M145.5 9.2 L140.2 13.6 L145.5 18 V15.2 C150 14.6 152.5 15.8 154.6 19.8 C154.4 14.6 151.2 11.2 145.5 11.6Z" fill="#2e2e2e"/><path d="M160.8 11.6h6.4l-3.2 5.120000000000001z" fill="#1e1e1e"/><path d="M191.5 9.2 L196.8 13.6 L191.5 18 V15.2 C187 14.6 184.5 15.8 182.4 19.8 C182.6 14.6 185.8 11.2 191.5 11.6Z" fill="#8c8c8c"/><path d="M203.8 11.6h6.4l-3.2 5.120000000000001z" fill="#8c8c8c"/><text x="1120.5" y="17.8" font-size="11.4" fill="#333" font-weight="normal" textLength="84" lengthAdjust="spacingAndGlyphs" stroke="#333" stroke-width="0.3">Taylor Hokanson</text><path d="M1210.6 11.6h5.6l-2.8 4.4799999999999995z" fill="#111"/><circle cx="1248" cy="14" r="7.4" fill="#424242"/><text x="1244.2" y="18.4" font-size="11.5" fill="#fff" font-weight="bold">?</text><path d="M1259.2 11.6h6.2l-3.1 4.960000000000001z" fill="#111"/><path d="M18.7 31.2L26.2 33V40.6L18.7 44.7L11.3 40.6V33Z" fill="#383838" stroke="#2a2a2a" stroke-width="0.9" stroke-linejoin="round"/><path d="M12 34L18.2 35.8V43.4L12 40.2Z" fill="#a3a3a3"/><text x="36" y="43.6" font-size="11.8" fill="#383838" font-weight="bold" textLength="103.5" lengthAdjust="spacingAndGlyphs" stroke="#383838" stroke-width="0.15">getting started v8</text><path d="M172.8 35.2 L180.2 42.6 M180.2 35.2 L172.8 42.6" stroke="#5c5c5c" stroke-width="1.9"/><path d="M1260.2 42 L1265.6 36.6 L1271 42" fill="none" stroke="#555" stroke-width="2.2"/><rect x="5" y="53" width="832" height="57.5" fill="#e1e1e1"/><rect x="6.5" y="54.5" width="95.5" height="54" fill="#a9a9a9"/><path d="M10.6 71V92M13.6 71V92" stroke="#5c5c5c" stroke-width="1.1"/><path d="M11.6 71V92M14.6 71V92" stroke="#c8c8c8" stroke-width="0.6"/><path d="M188 56V107" stroke="#cfcfcf" stroke-width="1"/><path d="M189 56V107" stroke="#ececec" stroke-width="1"/><path d="M258 56V107" stroke="#cfcfcf" stroke-width="1"/><path d="M259 56V107" stroke="#ececec" stroke-width="1"/><path d="M344.5 56V107" stroke="#cfcfcf" stroke-width="1"/><path d="M345.5 56V107" stroke="#ececec" stroke-width="1"/><path d="M413 56V107" stroke="#cfcfcf" stroke-width="1"/><path d="M414 56V107" stroke="#ececec" stroke-width="1"/><path d="M506.7 56V107" stroke="#cfcfcf" stroke-width="1"/><path d="M507.7 56V107" stroke="#ececec" stroke-width="1"/><path d="M576.7 56V107" stroke="#cfcfcf" stroke-width="1"/><path d="M577.7 56V107" stroke="#ececec" stroke-width="1"/><path d="M640.6 56V107" stroke="#cfcfcf" stroke-width="1"/><path d="M641.6 56V107" stroke="#ececec" stroke-width="1"/><path d="M695.5 56V107" stroke="#cfcfcf" stroke-width="1"/><path d="M696.5 56V107" stroke="#ececec" stroke-width="1"/><path d="M770 56V107" stroke="#cfcfcf" stroke-width="1"/><path d="M771 56V107" stroke="#ececec" stroke-width="1"/><rect x="36.6" y="58.6" width="45" height="27.8" fill="#dadada" stroke="#8d8d8d" stroke-width="1"/><path d="M53.2 58.6V86.4M72.6 64V86.4M60.5 58.8L72.6 64L81.6 61" fill="none" stroke="#8d8d8d" stroke-width="0.9"/><path d="M43.4 67.1L58.7 64.3L68.1 68.7L56.9 70.9Z" fill="#fbfbfb" stroke="#8a8a8a" stroke-width="0.9"/><path d="M43.4 67.1L56.9 70.9V83.3L43.4 79.5Z" fill="#f1f1f1" stroke="#8a8a8a" stroke-width="0.9"/><path d="M56.9 70.9L68.1 68.7V80.5L56.9 83.3Z" fill="#e2e2e2" stroke="#8a8a8a" stroke-width="0.9"/><path d="M112.2 68.8L119.4 61.4H139.7V82.5L131.6 88.6H112.2Z" fill="#7fa3d6" stroke="#1b2233" stroke-width="1.3" stroke-linejoin="round"/><path d="M112.9 68.6L119.8 62.1H139L131.6 68.6Z" fill="#cfe0f6"/><path d="M131.9 68.9L139 62.4V82.2L131.9 88Z" fill="#5a7fb6"/><rect x="112.9" y="69.2" width="18.6" height="18.7" fill="url(#gBlueF)"/><rect x="152.2" y="61.2" width="24.6" height="24.4" rx="7" fill="#b77ae6" stroke="#6b2aa6" stroke-width="1"/><path d="M158.5 63V85" stroke="#6a28a8" stroke-width="1"/><path d="M164 63V85" stroke="#6a28a8" stroke-width="1"/><path d="M169.5 63V85" stroke="#6a28a8" stroke-width="1"/><path d="M153 67.5H176" stroke="#6a28a8" stroke-width="1"/><path d="M153 73.5H176" stroke="#6a28a8" stroke-width="1"/><path d="M153 79.5H176" stroke="#6a28a8" stroke-width="1"/><rect x="172" y="79" width="8.4" height="9" fill="#fff" stroke="#111" stroke-width="1.2"/><path d="M174.4 81L178.4 83.5L174.4 86Z" fill="#111"/><path d="M209.2 67.5L214.5 61.6H233.5V82.8L228.2 88.6H209.2Z" fill="#fff" stroke="#1b2233" stroke-width="1.3" stroke-linejoin="round"/><path d="M214.8 67.8L220 62H233V82.5L228 88H214.8Z" fill="url(#gBlueF)"/><path d="M228 67.8L233 62.2V82.5L228 88Z" fill="#5a7fb6"/><path d="M214.8 67.5H228L233 62H220Z" fill="#c9dcf4"/><path d="M214.6 62V88.6" stroke="#1b2233" stroke-width="1"/><path d="M230.6 71.4H234.6V69.2L238 73.2L234.6 77.2V75H230.6Z" fill="#111"/><path d="M280.2 77.6L284.6 73.2H294.8V84.8L291.4 88.4H280.2Z" fill="#dfe0e4" stroke="#1e1e1e" stroke-width="1.2" stroke-linejoin="round"/><path d="M291.4 77.8L294.4 74V84.6L291.4 88Z" fill="#b9bbc2"/><path d="M280.6 77.6H291.4V88.2" fill="none" stroke="#1e1e1e" stroke-width="0.9"/><path d="M281 77.9L284.8 73.6H294.2L291.2 77.4Z" fill="#f4f4f6"/><rect x="267.4" y="77.6" width="12.8" height="10.8" fill="#d8d9de" stroke="#1e1e1e" stroke-width="1.2"/><path d="M267.4 65.2L270.4 62.2H283.8V74.6L280.4 77.8H267.4Z" fill="#8eafdf" stroke="#1e1e1e" stroke-width="1.2" stroke-linejoin="round"/><path d="M280.6 65.4L283.4 62.6V74.4L280.6 77.4Z" fill="#5f83bb"/><path d="M267.8 65.2H280.6V77.6" fill="none" stroke="#1e1e1e" stroke-width="0.8"/><path d="M268.2 64.9L270.6 62.6H283.2L280.4 64.9Z" fill="#c9dcf5"/><path d="M272.4 61.8V72.2M267.2 67H277.6" stroke="#1a1a1a" stroke-width="4.2" stroke-linecap="round"/><path d="M272.4 62.8V71.2M268.2 67H276.6" stroke="#fff" stroke-width="2.2"/><path d="M309.6 86.6V72.4L316.4 64.6V76.6L312.6 86.8Z" fill="#d9dbe0" stroke="#1e1e1e" stroke-width="1.2" stroke-linejoin="round"/><rect x="315.8" y="63.4" width="4.8" height="12.2" rx="2.2" fill="#e4e5ea" stroke="#1e1e1e" stroke-width="1.1"/><ellipse cx="318.2" cy="65.2" rx="1.2" ry="0.9" fill="#333"/><path d="M327 82.2V67.6L335 75.4V88.2L330.6 84.4Z" fill="#d9dbe0" stroke="#1e1e1e" stroke-width="1.2" stroke-linejoin="round"/><rect x="322.8" y="72.2" width="4.6" height="12.2" rx="2.2" fill="#e4e5ea" stroke="#1e1e1e" stroke-width="1.1"/><ellipse cx="325.1" cy="73.8" rx="1.5" ry="1" fill="#fff"/><path d="M322 70L326.4 67.4M317.2 78.6L318.8 82" stroke="#e9a27a" stroke-width="1.1"/><path d="M367 83.5H382M382 83.5C396 84 396 65 381 66" fill="none" stroke="#555" stroke-width="1.5"/><rect x="364.0" y="81.1" width="4.8" height="4.8" fill="#2a5ac8" stroke="#1a3a90" stroke-width="0.6"/><rect x="379.40000000000003" y="81.1" width="4.8" height="4.8" fill="#2a5ac8" stroke="#1a3a90" stroke-width="0.6"/><rect x="379.0" y="63.6" width="4.8" height="4.8" fill="#2a5ac8" stroke="#1a3a90" stroke-width="0.6"/><path d="M447 67.5L451.5 62.5H463V83.5L458.4 88.6H447Z" fill="#f0f0f2" stroke="#1a1a1a" stroke-width="1.2" stroke-linejoin="round"/><path d="M458.4 67.6L462.4 63.2V83.2L458.4 87.8Z" fill="#3d9a35"/><path d="M447.6 67.5H458.4V88" fill="none" stroke="#1a1a1a" stroke-width="0.8"/><path d="M447.8 68.2H457.8V88H447.8Z" fill="url(#gWhite)"/><path d="M466.2 72L474.8 62.6V80L466.2 89.2Z" fill="#e4773a" stroke="#3a1a08" stroke-width="1.1" stroke-linejoin="round"/><path d="M528 70.5H554" stroke="#444" stroke-width="1.4"/><path d="M527.8 68.2V72.8M554.2 68.2V72.8" stroke="#444" stroke-width="1.6"/><rect x="527.4" y="77.6" width="27.2" height="6" rx="1.5" fill="#efc52a" stroke="#7a5410" stroke-width="1"/><path d="M529.5 79.4h23" stroke="#8a6a10" stroke-width="0.9" stroke-dasharray="1.2 1.6"/><rect x="595" y="61.4" width="28" height="27.6" fill="url(#gSky)" stroke="#111" stroke-width="1.3"/><circle cx="614.5" cy="68.6" r="2.8" fill="#fffbcc"/><path d="M595.7 81L605 73.5L614 80L617 77.5L622.3 82V88.3H595.7Z" fill="#4a525c"/><path d="M609 76L617 77.5L622.3 82V88.3H617Z" fill="#8a96a4"/><path d="M656 68.5L660 63.5H680L683 67V88.2H656Z" fill="url(#gWhite)" stroke="#222" stroke-width="1.2" stroke-linejoin="round"/><rect x="658.4" y="72" width="22.4" height="13.6" fill="#2f3238" stroke="#111" stroke-width="0.8"/><path d="M661.5 82L664 78H675.2L678 82Z" fill="#e8e8ea"/><path d="M669.5 73V78M667.4 76L669.5 79L671.6 76" stroke="#4a86d6" stroke-width="1.6" fill="none"/><circle cx="679.2" cy="68.8" r="0.9" fill="#2a8a2a"/><rect x="720.4" y="63.4" width="21.8" height="19.8" fill="#c3c5cc" stroke="#333" stroke-width="1.1"/><rect x="721" y="64" width="20.6" height="3.6" fill="#7b7e86"/><path d="M722.5 71.6L724.5 73.2L722.5 74.8M726 73.2H728.4" fill="none" stroke="#333" stroke-width="0.9"/><g transform="translate(741.6 82.2)"><circle r="5.2" fill="#4a6fb0" stroke="#1f3768" stroke-width="0.9"/><circle cx="5.20" cy="0.00" r="1.9" fill="#4a6fb0" stroke="#1f3768" stroke-width="0.7"/><circle cx="3.68" cy="3.68" r="1.9" fill="#4a6fb0" stroke="#1f3768" stroke-width="0.7"/><circle cx="0.00" cy="5.20" r="1.9" fill="#4a6fb0" stroke="#1f3768" stroke-width="0.7"/><circle cx="-3.68" cy="3.68" r="1.9" fill="#4a6fb0" stroke="#1f3768" stroke-width="0.7"/><circle cx="-5.20" cy="0.00" r="1.9" fill="#4a6fb0" stroke="#1f3768" stroke-width="0.7"/><circle cx="-3.68" cy="-3.68" r="1.9" fill="#4a6fb0" stroke="#1f3768" stroke-width="0.7"/><circle cx="-0.00" cy="-5.20" r="1.9" fill="#4a6fb0" stroke="#1f3768" stroke-width="0.7"/><circle cx="3.68" cy="-3.68" r="1.9" fill="#4a6fb0" stroke="#1f3768" stroke-width="0.7"/><circle r="3.2" fill="#4a6fb0"/><circle r="2" fill="#fff"/></g><rect x="785.2" y="57.6" width="36" height="36.4" rx="1" fill="#3b6ba6"/><rect x="788.6" y="60.6" width="20.4" height="13.6" fill="none" stroke="#3a9a48" stroke-width="1.4"/><path d="M808.6 75.2V86.6L811.2 84.2L813.6 89L815.6 88L813.2 83.4H816.8Z" fill="#fff" stroke="#222" stroke-width="0.7"/><text x="36.3" y="104.6" font-size="10.2" fill="#fff" font-weight="bold" textLength="37.1" lengthAdjust="spacingAndGlyphs" stroke="#fff" stroke-width="0.35">MODEL</text><path d="M76.0 98.4h5.4l-2.7 4.32z" fill="#fff"/><text x="120" y="104.6" font-size="10.2" fill="#333" font-weight="normal" textLength="38.1" lengthAdjust="spacingAndGlyphs" stroke="#333" stroke-width="0.35">CREATE</text><path d="M161.2 98.4h5.4l-2.7 4.32z" fill="#222"/><text x="199.7" y="104.6" font-size="10.2" fill="#333" font-weight="normal" textLength="38.7" lengthAdjust="spacingAndGlyphs" stroke="#333" stroke-width="0.35">MODIFY</text><path d="M241.5 98.4h5.4l-2.7 4.32z" fill="#222"/><text x="271.4" y="104.6" font-size="10.2" fill="#333" font-weight="normal" textLength="49.2" lengthAdjust="spacingAndGlyphs" stroke="#333" stroke-width="0.35">ASSEMBLE</text><path d="M324.5 98.4h5.4l-2.7 4.32z" fill="#222"/><text x="354.8" y="104.6" font-size="10.2" fill="#333" font-weight="normal" textLength="38.6" lengthAdjust="spacingAndGlyphs" stroke="#333" stroke-width="0.35">SKETCH</text><path d="M396.6 98.4h5.4l-2.7 4.32z" fill="#222"/><text x="425.1" y="104.6" font-size="10.2" fill="#333" font-weight="normal" textLength="61.9" lengthAdjust="spacingAndGlyphs" stroke="#333" stroke-width="0.35">CONSTRUCT</text><path d="M489.8 98.4h5.4l-2.7 4.32z" fill="#222"/><text x="517.9" y="104.6" font-size="10.2" fill="#333" font-weight="normal" textLength="39.8" lengthAdjust="spacingAndGlyphs" stroke="#333" stroke-width="0.35">INSPECT</text><path d="M561.5 98.4h5.4l-2.7 4.32z" fill="#222"/><text x="586.8" y="104.6" font-size="10.2" fill="#333" font-weight="normal" textLength="34.4" lengthAdjust="spacingAndGlyphs" stroke="#333" stroke-width="0.35">INSERT</text><path d="M624.1 98.4h5.4l-2.7 4.32z" fill="#222"/><text x="652" y="104.6" font-size="10.2" fill="#333" font-weight="normal" textLength="27.5" lengthAdjust="spacingAndGlyphs" stroke="#333" stroke-width="0.35">MAKE</text><path d="M682.1 98.4h5.4l-2.7 4.32z" fill="#222"/><text x="707.1" y="104.6" font-size="10.2" fill="#333" font-weight="normal" textLength="44.6" lengthAdjust="spacingAndGlyphs" stroke="#333" stroke-width="0.35">ADD-INS</text><path d="M754.1 98.4h5.4l-2.7 4.32z" fill="#222"/><text x="781.5" y="104.6" font-size="10.2" fill="#333" font-weight="normal" textLength="34.9" lengthAdjust="spacingAndGlyphs" stroke="#333" stroke-width="0.35">SELECT</text><path d="M820.2 98.4h5.4l-2.7 4.32z" fill="#222"/><rect x="6.5" y="115.5" width="247" height="21" fill="#d6d6d6" stroke="#a6a6a6" stroke-width="1"/><path d="M11 125.6L15.4 122.6V128.6Z M15.6 125.6L20 122.6V128.6Z" fill="#222"/><text x="31.6" y="128.6" font-size="10.2" fill="#4a4a4a" font-weight="normal" textLength="46.2" lengthAdjust="spacingAndGlyphs" stroke="#4a4a4a" stroke-width="0.3">BROWSER</text><circle cx="239.6" cy="125.2" r="4.6" fill="#1e1e1e"/><path d="M237.2 125.2H242" stroke="#fff" stroke-width="1.3"/><path d="M250.6 119.5V131" stroke="#8a8a8a" stroke-width="1.2"/><path d="M252.2 119.5V131" stroke="#bdbdbd" stroke-width="1"/><rect x="40" y="142.3" width="45.4" height="17.6" fill="#c6c6c6"/><rect x="85.4" y="142.3" width="115.2" height="17.6" fill="#a7c9f4"/><path d="M21.8 155.8L31.8 145.6V155.8Z" fill="url(#gTri)" stroke="#111" stroke-width="1"/><use href="#bulbY" x="49.6" y="149"/><path d="M66.6 145.2L68.4 143.4H72.6L74.2 145V158.4H66.6Z" fill="#f4f4f4" stroke="#222" stroke-width="1.1" stroke-linejoin="round"/><path d="M72.6 150.6L74.4 149H80.4V156.6L78.6 158.4H72.6Z" fill="#f0f0f0" stroke="#222" stroke-width="1.1" stroke-linejoin="round"/><text x="94.4" y="154.8" font-size="11" fill="#17306e" font-weight="bold" textLength="94.5" lengthAdjust="spacingAndGlyphs" stroke="#17306e" stroke-width="0.2">getting started v8</text><rect x="57.2" y="164.4" width="105.3" height="18.2" fill="#c9c9c9"/><use href="#tri" x="39.6" y="167.5"/><use href="#folder" x="59" y="168.1"/><text x="87.8" y="177.2" font-size="11" fill="#333" font-weight="normal" textLength="66.1" lengthAdjust="spacingAndGlyphs" stroke="#333" stroke-width="0.25">Named Views</text><rect x="57.2" y="186.9" width="90.4" height="18.2" fill="#c9c9c9"/><path d="M60.2 181.4" fill="none"/><path d="M60.4 188.5h8.4l3.6 3.6v8.2h-12z" fill="url(#gWhite)" stroke="#222" stroke-width="1.1" stroke-linejoin="round"/><path d="M68.8 188.5v3.6h3.6" fill="none" stroke="#222" stroke-width="0.8"/><rect x="59.8" y="200.1" width="13.4" height="3.2" rx="0.8" fill="#e8b820" stroke="#a06a10" stroke-width="0.8"/><text x="87.8" y="199.7" font-size="11" fill="#333" font-weight="normal" textLength="50.8" lengthAdjust="spacingAndGlyphs" stroke="#333" stroke-width="0.25">Units: mm</text><rect x="57.2" y="209.4" width="91.2" height="18.2" fill="#c9c9c9"/><use href="#tri" x="39.6" y="212.5"/><use href="#bulbB" x="66.3" y="216.1"/><use href="#folder" x="83.3" y="213.1"/><text x="111.4" y="222.2" font-size="11" fill="#333" font-weight="normal" textLength="29.9" lengthAdjust="spacingAndGlyphs" stroke="#333" stroke-width="0.25">Origin</text><rect x="57.2" y="231.9" width="106.2" height="18.2" fill="#c9c9c9"/><use href="#tri" x="39.6" y="235.0"/><use href="#bulbB" x="66.3" y="238.6"/><use href="#folder" x="83.3" y="235.6"/><text x="111.4" y="244.7" font-size="11" fill="#333" font-weight="normal" textLength="43.1" lengthAdjust="spacingAndGlyphs" stroke="#333" stroke-width="0.25">Sketches</text><rect x="57.2" y="254.4" width="147.8" height="18.2" fill="#c9c9c9"/><use href="#tri" x="39.6" y="257.5"/><use href="#bulbY" x="66.3" y="261.1"/><use href="#cubeI" x="83.4" y="255.7"/><text x="111.1" y="267.2" font-size="11" fill="#333" font-weight="normal" textLength="83.3" lengthAdjust="spacingAndGlyphs" stroke="#333" stroke-width="0.25">Upper Triangle:1</text><rect x="57.2" y="276.9" width="144.5" height="18.2" fill="#c9c9c9"/><use href="#tri" x="39.6" y="280.0"/><use href="#bulbY" x="66.3" y="283.6"/><use href="#cubeI" x="83.4" y="278.2"/><text x="111.1" y="289.7" font-size="11" fill="#333" font-weight="normal" textLength="82.5" lengthAdjust="spacingAndGlyphs" stroke="#333" stroke-width="0.25">Lower Triangle:1</text><rect x="57.2" y="299.4" width="76.8" height="18.2" fill="#c9c9c9"/><use href="#tri" x="39.6" y="302.5"/><use href="#bulbY" x="66.3" y="306.1"/><use href="#cubeI" x="83.4" y="300.7"/><text x="111.1" y="312.2" font-size="11" fill="#333" font-weight="normal" textLength="11.7" lengthAdjust="spacingAndGlyphs" stroke="#333" stroke-width="0.25">J:1</text><rect x="57.2" y="321.9" width="80.3" height="18.2" fill="#c9c9c9"/><use href="#tri" x="39.6" y="325.0"/><use href="#bulbY" x="66.3" y="328.6"/><use href="#cubeI" x="83.4" y="323.2"/><text x="111.1" y="334.7" font-size="11" fill="#333" font-weight="normal" textLength="17.5" lengthAdjust="spacingAndGlyphs" stroke="#333" stroke-width="0.25">M:1</text><rect x="57.2" y="344.4" width="80.3" height="18.2" fill="#c9c9c9"/><use href="#tri" x="39.6" y="347.5"/><use href="#bulbY" x="66.3" y="351.1"/><use href="#cubeI" x="83.4" y="345.7"/><text x="111.1" y="357.2" font-size="11" fill="#333" font-weight="normal" textLength="15.3" lengthAdjust="spacingAndGlyphs" stroke="#333" stroke-width="0.25">K:1</text><rect x="57.2" y="366.9" width="80.3" height="18.2" fill="#c9c9c9"/><use href="#tri" x="39.6" y="370.0"/><use href="#bulbY" x="66.3" y="373.6"/><use href="#cubeI" x="83.4" y="368.2"/><text x="111.1" y="379.7" font-size="11" fill="#333" font-weight="normal" textLength="15.3" lengthAdjust="spacingAndGlyphs" stroke="#333" stroke-width="0.25">C:1</text><rect x="57.2" y="389.4" width="76.8" height="18.2" fill="#c9c9c9"/><use href="#tri" x="39.6" y="392.5"/><use href="#bulbY" x="66.3" y="396.1"/><use href="#cubeI" x="83.4" y="390.7"/><text x="111.1" y="402.2" font-size="11" fill="#333" font-weight="normal" textLength="13.9" lengthAdjust="spacingAndGlyphs" stroke="#333" stroke-width="0.25">F:1</text><rect x="57.2" y="411.9" width="136.4" height="18.2" fill="#c9c9c9"/><use href="#tri" x="39.6" y="415.0"/><use href="#bulbY" x="66.3" y="418.6"/><use href="#cubeI" x="83.4" y="413.2"/><path d="M89 421.0h5.4l-1 2.4h1.6l-0.8 2h-4.4l-0.8-2h1.6z" fill="#e06a3a" stroke="#8a2a10" stroke-width="0.5"/><path d="M91.8 425.4v3" stroke="#222" stroke-width="0.9"/><text x="111.1" y="424.7" font-size="11" fill="#333" font-weight="normal" textLength="73.6" lengthAdjust="spacingAndGlyphs" stroke="#333" stroke-width="0.25">Component9:1</text><rect x="6.5" y="624" width="247" height="21.4" fill="#d6d6d6" stroke="#a6a6a6" stroke-width="1"/><text x="31.3" y="637.7" font-size="10.2" fill="#4a4a4a" font-weight="normal" textLength="57.3" lengthAdjust="spacingAndGlyphs" stroke="#4a4a4a" stroke-width="0.3">COMMENTS</text><circle cx="239.6" cy="634" r="4.6" fill="#1e1e1e"/><path d="M237.2 634H242M239.6 631.6V636.4" stroke="#fff" stroke-width="1.3"/><path d="M250.6 628V640" stroke="#8a8a8a" stroke-width="1.2"/><path d="M252.2 628V640" stroke="#bdbdbd" stroke-width="1"/><rect x="526" y="623.6" width="135.5" height="21.6" fill="#cdcdcd"/><rect x="667.6" y="623.6" width="87.4" height="21.6" fill="#cdcdcd"/><path d="M535.6 626.5V642.5" stroke="#222" stroke-width="1.3"/><path d="M533.4 629L535.6 625.8L537.8 629Z" fill="#222"/><ellipse cx="535.6" cy="635" rx="7" ry="2.6" fill="none" stroke="#222" stroke-width="1.2"/><rect x="533.6" y="632.6" width="4" height="10" fill="#f4f4f4" stroke="#222" stroke-width="0.9"/><path d="M549.2 633h4.6l-2.3 3.6799999999999997z" fill="#111"/><rect x="559.4" y="631.6" width="14.4" height="10.4" fill="#eee" stroke="#333" stroke-width="1.2"/><rect x="562" y="634.6" width="9.2" height="3.6" fill="#9a9a9a" stroke="#333" stroke-width="0.7"/><path d="M561 630.4L572.6 627" stroke="#333" stroke-width="1.1"/><path d="M586.5 634.5V628.8C586.5 627.6 588.2 627.6 588.2 628.8V633.2V627.4C588.2 626.2 590 626.2 590 627.4V633V627.8C590 626.6 591.8 626.6 591.8 627.8V633.4V629.6C591.8 628.4 593.6 628.4 593.6 629.6V637.4C593.6 640.6 591.6 642.6 588.8 642.6C586.6 642.6 585.2 641.2 584 639.2L582.2 635.8C581.6 634.8 582.8 634 583.6 634.8L586.5 637.4Z" fill="#fff" stroke="#222" stroke-width="1"/><circle cx="612.2" cy="635.2" r="4.4" fill="#d8e4ee" stroke="#222" stroke-width="1.4"/><path d="M615.4 638.4L619 642" stroke="#222" stroke-width="2.2"/><path d="M618.6 627V632.4M616 629.6H621.2M616 633.6H621.2" stroke="#333" stroke-width="0.9"/><rect x="632.4" y="627" width="14" height="14" fill="none" stroke="#555" stroke-width="0.8" stroke-dasharray="1 1"/><circle cx="638.6" cy="633.4" r="5" fill="#dde8f0" stroke="#222" stroke-width="1.3"/><path d="M642.2 637L646.6 641.4" stroke="#222" stroke-width="2.2"/><path d="M652.8 633h4.6l-2.3 3.6799999999999997z" fill="#111"/><rect x="671.4" y="627.2" width="14.6" height="11.2" rx="1" fill="#5f8fd0" stroke="#222" stroke-width="1.2"/><rect x="673.2" y="629" width="11" height="7.6" fill="#9fc0ea"/><path d="M676 638.6V641H682V638.6" fill="#ddd" stroke="#222" stroke-width="0.9"/><path d="M688.6 633h4.6l-2.3 3.6799999999999997z" fill="#111"/><rect x="700" y="627" width="14.6" height="14.6" fill="#f2f2f2" stroke="#333" stroke-width="1.1"/><path d="M702.92 627V641.6M700 629.92H714.6" stroke="#555" stroke-width="0.7"/><path d="M705.84 627V641.6M700 632.84H714.6" stroke="#555" stroke-width="0.7"/><path d="M708.76 627V641.6M700 635.76H714.6" stroke="#555" stroke-width="0.7"/><path d="M711.68 627V641.6M700 638.68H714.6" stroke="#555" stroke-width="0.7"/><path d="M717.6 633h4.6l-2.3 3.6799999999999997z" fill="#111"/><rect x="729.2" y="627.4" width="15" height="13.6" fill="#4a6fb5" stroke="#223" stroke-width="1"/><path d="M731 629.2h5v4h-5zM737.4 629.2h5v4h-5zM731 635.2h5v4h-5zM737.4 635.2h5v4h-5z" fill="#a8c4ec"/><path d="M746.8 633h4.6l-2.3 3.6799999999999997z" fill="#111"/><g opacity="0.75"><path d="M1210.5 68.5H1254L1256.4 91H1210.5Z" fill="#e6e6e6" stroke="#9a9a9a" stroke-width="0.9" stroke-dasharray="3 1.5"/><path d="M1210.6 91H1256.4L1255.4 124.6H1212Z" fill="#e0e0e0" stroke="#9a9a9a" stroke-width="0.9" stroke-dasharray="3 1.5"/><path d="M1210 91.2H1257" stroke="#555" stroke-width="1.2" stroke-dasharray="4 3"/><text x="1224.2" y="81.2" font-size="7.4" fill="#7a7a7a" font-weight="bold" textLength="16.5" lengthAdjust="spacingAndGlyphs">TOP</text><text x="1218.7" y="111.8" font-size="9.8" fill="#606060" font-weight="bold" textLength="30.6" lengthAdjust="spacingAndGlyphs">FRONT</text></g><rect x="0" y="650" width="1280" height="47" fill="#c6c6c6"/><rect x="0" y="696.4" width="1280" height="23.6" fill="#d0d0d0"/><path d="M0 696.8H1280" stroke="#9a9a9a" stroke-width="1"/><path d="M12.4 663.6V675.6" stroke="#222" stroke-width="1.8"/><path d="M24 663.8V675.4L14.4 669.6Z" fill="#222"/><path d="M35.2 669.6L43.6 663.8V675.4Z" fill="#222"/><rect x="45" y="667.4" width="2" height="4.4" fill="#222"/><rect x="57.4" y="667.4" width="2" height="4.4" fill="#222"/><path d="M69.8 669.6L61.4 663.8V675.4Z" fill="#222"/><path d="M82.6 663.4V676L93.6 669.7Z" fill="#222"/><path d="M105.8 663.8V675.4L115.4 669.6Z" fill="#222"/><path d="M116.6 663.6V675.6" stroke="#222" stroke-width="1.8"/><use href="#tSketch" x="138.6" y="662.8"/><path d="M146.2 682V686" stroke="#333" stroke-width="1.1"/><use href="#tSketch" x="161.2" y="662.8"/><path d="M168.8 682V686" stroke="#333" stroke-width="1.1"/><use href="#tBox" x="183.9" y="662.8"/><path d="M191.3 682V686" stroke="#333" stroke-width="1.1"/><use href="#tSketch" x="206.3" y="662.8"/><path d="M213.9 682V686" stroke="#333" stroke-width="1.1"/><use href="#tBox" x="229.0" y="662.8"/><path d="M236.4 682V686" stroke="#333" stroke-width="1.1"/><use href="#tSketch" x="251.4" y="662.8"/><path d="M259.0 682V686" stroke="#333" stroke-width="1.1"/><use href="#tSketch" x="274.0" y="662.8"/><path d="M281.6 682V686" stroke="#333" stroke-width="1.1"/><use href="#tBox" x="296.7" y="662.8"/><path d="M304.1 682V686" stroke="#333" stroke-width="1.1"/><use href="#tSketch" x="319.1" y="662.8"/><path d="M326.7 682V686" stroke="#333" stroke-width="1.1"/><use href="#tBox" x="341.8" y="662.8"/><path d="M349.2 682V686" stroke="#333" stroke-width="1.1"/><use href="#tSketch" x="364.2" y="662.8"/><path d="M371.8 682V686" stroke="#333" stroke-width="1.1"/><use href="#tBox" x="387.0" y="662.8"/><path d="M394.4 682V686" stroke="#333" stroke-width="1.1"/><use href="#tSketch" x="409.3" y="662.8"/><path d="M416.9 682V686" stroke="#333" stroke-width="1.1"/><use href="#tBox" x="432.1" y="662.8"/><path d="M439.5 682V686" stroke="#333" stroke-width="1.1"/><use href="#tSketch" x="454.4" y="662.8"/><path d="M462.0 682V686" stroke="#333" stroke-width="1.1"/><use href="#tBox" x="477.2" y="662.8"/><path d="M484.6 682V686" stroke="#333" stroke-width="1.1"/><use href="#tSketch" x="499.6" y="662.8"/><path d="M507.2 682V686" stroke="#333" stroke-width="1.1"/><path d="M523.7 668L528.7 662.6L535.7 668.6L531.1 673.6L528.7 671L526.7 676.4L523.7 674.6Z" fill="#f4f4f4" stroke="#222" stroke-width="1.1"/><path d="M528.7 671L531.1 673.6L535.7 668.6" fill="none" stroke="#f08030" stroke-width="1.8"/><path d="M529.7 682V686" stroke="#333" stroke-width="1.1"/><use href="#tExt" x="543.7" y="661.8"/><path d="M552.3 682V686" stroke="#333" stroke-width="1.1"/><use href="#tExt" x="566.2" y="661.8"/><path d="M574.8 682V686" stroke="#333" stroke-width="1.1"/><use href="#tExt" x="588.8" y="661.8"/><path d="M597.4 682V686" stroke="#333" stroke-width="1.1"/><use href="#tExt" x="611.4" y="661.8"/><path d="M620.0 682V686" stroke="#333" stroke-width="1.1"/><use href="#tExt" x="633.9" y="661.8"/><path d="M642.5 682V686" stroke="#333" stroke-width="1.1"/><use href="#tExt" x="656.5" y="661.8"/><path d="M665.1 682V686" stroke="#333" stroke-width="1.1"/><use href="#tExt" x="679.0" y="661.8"/><path d="M687.6 682V686" stroke="#333" stroke-width="1.1"/><use href="#tBox" x="702.8" y="662.8"/><path d="M710.2 682V686" stroke="#333" stroke-width="1.1"/><path d="M725.8 665V674.6C725.8 677.4 739.8 677.4 739.8 674.6V665Z" fill="#a9c6ea" stroke="#333" stroke-width="1.1"/><ellipse cx="732.8" cy="665" rx="7" ry="2.6" fill="#d6e6f8" stroke="#333" stroke-width="1.1"/><path d="M732.8 682V686" stroke="#333" stroke-width="1.1"/><rect x="748.9" y="662.4" width="7" height="7.4" rx="2" fill="#eee" stroke="#333" stroke-width="1"/><rect x="754.7" y="668.6" width="7" height="8" rx="2" fill="#eee" stroke="#333" stroke-width="1"/><path d="M750.3 670V673.6H753.9" fill="none" stroke="#2a5ac8" stroke-width="1.2"/><path d="M755.3 682V686" stroke="#333" stroke-width="1.1"/><use href="#tMove" x="769.9" y="661.8"/><path d="M777.9 682V686" stroke="#333" stroke-width="1.1"/><use href="#tMove" x="792.4" y="661.8"/><path d="M800.4 682V686" stroke="#333" stroke-width="1.1"/><path d="M819.6 662.6H826.8L825.6 666L828.6 671.4H817.8L820.8 666Z" fill="#e4473a" stroke="#9a1a10" stroke-width="0.8"/><path d="M823.0 671.4V677" stroke="#444" stroke-width="1"/><path d="M823.0 682V686" stroke="#333" stroke-width="1.1"/><path d="M147 686H823.0" stroke="#333" stroke-width="1.4"/><path d="M828.8 657.2H838.8V661.6L834.2 664.6L833.4 664.6L828.8 661.6Z" fill="#333"/><path d="M833.8 662V687.4" stroke="#333" stroke-width="1.8"/><circle cx="12" cy="708" r="4.4" fill="#111"/><path d="M9.6 708H14.4M12 705.6V710.4" stroke="#fff" stroke-width="1.3"/><text x="28" y="711.8" font-size="10.2" fill="#4a4a4a" font-weight="normal" textLength="88" lengthAdjust="spacingAndGlyphs" stroke="#4a4a4a" stroke-width="0.3">TEXT COMMANDS</text><g transform="translate(1266.4 668.4)"><rect x="-1.6" y="-7.2" width="3.2" height="3.4" fill="#333" transform="rotate(0)"/><rect x="-1.6" y="-7.2" width="3.2" height="3.4" fill="#333" transform="rotate(45)"/><rect x="-1.6" y="-7.2" width="3.2" height="3.4" fill="#333" transform="rotate(90)"/><rect x="-1.6" y="-7.2" width="3.2" height="3.4" fill="#333" transform="rotate(135)"/><rect x="-1.6" y="-7.2" width="3.2" height="3.4" fill="#333" transform="rotate(180)"/><rect x="-1.6" y="-7.2" width="3.2" height="3.4" fill="#333" transform="rotate(225)"/><rect x="-1.6" y="-7.2" width="3.2" height="3.4" fill="#333" transform="rotate(270)"/><rect x="-1.6" y="-7.2" width="3.2" height="3.4" fill="#333" transform="rotate(315)"/><circle r="5.2" fill="#333"/><circle r="2.4" fill="#c6c6c6"/><circle r="1.1" fill="#333"/></g><g opacity="0.55"><rect x="1235.6" y="676.8" width="30" height="30" rx="3.6" fill="#f4f4f4" stroke="#8a8a8a" stroke-width="1.8"/><text x="1145.5" y="701.8" font-size="29" font-weight="bold" fill="#f4f4f4" stroke="#8a8a8a" stroke-width="2.2" textLength="87" lengthAdjust="spacingAndGlyphs" paint-order="stroke">Linked</text><text x="1239.8" y="703.2" font-size="27" font-weight="bold" fill="#c0c0c0" stroke="#9a9a9a" stroke-width="0.6" textLength="22" lengthAdjust="spacingAndGlyphs">in</text></g><rect x="0" y="0" width="2.2" height="720" fill="#060606"/><rect x="1277.4" y="0" width="2.6" height="720" fill="#151515"/><path d="M0 719.5H1280" stroke="#8c8c8c" stroke-width="1"/></svg></body></html>
